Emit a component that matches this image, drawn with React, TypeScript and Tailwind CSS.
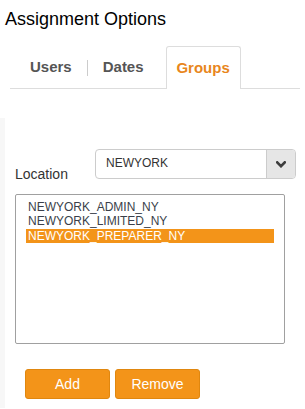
const GROUPS = ['NEWYORK_ADMIN_NY', 'NEWYORK_LIMITED_NY', 'NEWYORK_PREPARER_NY'];

export default function App() {
  const selected = 'NEWYORK_PREPARER_NY';

  return (
    <div className="w-[305px] h-[409px] bg-white overflow-hidden font-['Liberation_Sans',Arial,sans-serif]">
      <h1 className="pl-[5px] pt-[8px] text-[18px] leading-[22px] text-black">Assignment Options</h1>

      <div className="ml-[10px] mr-[5px] mt-[17px] flex items-end h-[42px] border-b border-[#dddddd]">
        <div className="flex items-center h-[41px] pl-[20px]">
          <span className="text-[15px] font-bold text-[#555555]">Users</span>
          <span className="mx-[15px] w-px h-[16px] bg-[#cccccc]" />
          <span className="text-[15px] font-bold text-[#555555]">Dates</span>
        </div>
        <div className="ml-[22px] w-[75px] h-[43px] -mb-px bg-white border border-b-0 border-[#dddddd] rounded-t-[3px] flex items-center justify-center">
          <span className="text-[15px] font-bold text-[#e8861c]">Groups</span>
        </div>
      </div>

      <div className="mt-[29px] border-l-[5px] border-[#f7f7f7] h-[290px] pl-[10px]">
        <div className="flex items-end pt-[31px]">
          <span className="w-[80px] text-[14px] leading-[16px] text-[#333333] translate-y-[3px]">Location</span>
          <div className="flex w-[201px] h-[30px] border border-[#cccccc] rounded-[4px] overflow-hidden">
            <div className="flex-1 pl-[10px] pt-[6px] text-[12px] leading-[14px] text-[#333333]">NEWYORK</div>
            <div className="w-[29px] bg-[#e6e6e6] border-l border-[#cccccc] flex items-center justify-center">
              <svg width="10" height="7" viewBox="0 0 10 7">
                <path d="M1.2 1.3 L5 5.2 L8.8 1.3" fill="none" stroke="#3d3d3d" strokeWidth="2.6" strokeLinecap="square" />
              </svg>
            </div>
          </div>
        </div>

        <div className="mt-[15px] w-[270px] h-[150px] border border-[#a0a0a0] rounded-[2px] pt-[5px] px-[10px]">
          {GROUPS.map(g => (
            <div
              key={g}
              className={`pl-[2px] text-[12px] leading-[14px] ${
                g === selected ? 'bg-[#f39419] text-white h-[14px] mt-[1px]' : 'text-[#3a3f4a]'
              }`}
            >
              {g}
            </div>
          ))}
        </div>

        <div className="flex gap-[5px] mt-[25px] pl-[10px]">
          <button className="w-[85px] h-[30px] bg-[#f39419] border border-[#e0870f] rounded-[3px] text-white text-[14px]">Add</button>
          <button className="w-[85px] h-[30px] bg-[#f39419] border border-[#e0870f] rounded-[3px] text-white text-[14px]">Remove</button>
        </div>
      </div>
    </div>
  );
}
